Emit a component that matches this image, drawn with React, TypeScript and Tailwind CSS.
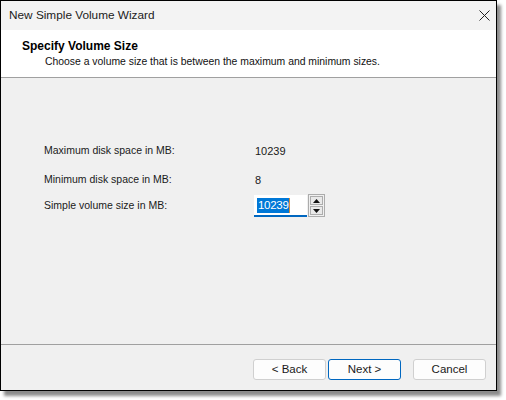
import React from "react";

const ui = { fontFamily: '"Liberation Sans", Arial, sans-serif' };

function WinButton({ label, primary }: { label: string; primary?: boolean }) {
  return (
    <div
      className={
        "flex h-[21px] w-[73px] items-center justify-center rounded-[3px] bg-[#fdfdfd] text-[11.5px] text-[#1a1a1a] " +
        (primary ? "border border-[#0067c0]" : "border border-[#d0d0d0]")
      }
    >
      {label}
    </div>
  );
}

function Spinner() {
  return (
    <div className="ml-[1px] flex h-[23px] w-[17px] flex-col gap-[1px] border border-[#acacac] bg-[#f0f0f0] p-[1px]">
      <div className="flex flex-1 items-center justify-center border border-[#adadad] bg-[#e9e9e9]">
        <svg width="7" height="4" viewBox="0 0 7 4">
          <path d="M0 4 L3.5 0 L7 4 Z" fill="#111" />
        </svg>
      </div>
      <div className="flex flex-1 items-center justify-center border border-[#adadad] bg-[#e9e9e9]">
        <svg width="7" height="4" viewBox="0 0 7 4">
          <path d="M0 0 L7 0 L3.5 4 Z" fill="#111" />
        </svg>
      </div>
    </div>
  );
}

export default function App() {
  return (
    <div className="h-[400px] w-[506px] bg-white" style={ui}>
      <div className="flex h-[391px] w-[497px] flex-col border border-black bg-[#f0f0f0] shadow-[4px_5px_3px_rgba(0,0,0,0.45)]">
        {/* title bar */}
        <div className="flex h-[29px] items-center justify-between bg-[#f3f3f3] pl-[8px] pr-[6px]">
          <span className="text-[11.8px] text-[#1b1b1b]">New Simple Volume Wizard</span>
          <svg width="11" height="11" viewBox="0 0 11 11">
            <path d="M0.5 0.5 L10.5 10.5 M10.5 0.5 L0.5 10.5" stroke="#222" strokeWidth="1" />
          </svg>
        </div>
        {/* header */}
        <div className="flex h-[48px] flex-col border-b border-[#a0a0a0] bg-white pl-[21px] pt-[9px]">
          <span className="text-[12px] font-bold leading-[15px] text-black">Specify Volume Size</span>
          <span className="pl-[23px] text-[10.4px] leading-[16px] text-[#111]">
            Choose a volume size that is between the maximum and minimum sizes.
          </span>
        </div>
        {/* body */}
        <div className="flex flex-1 flex-col border-b border-[#a0a0a0] pl-[43px] pt-[66px] text-[10.5px] text-[#1a1a1a]">
          <div className="flex h-[14px] items-center">
            <span className="w-[211px]">Maximum disk space in MB:</span>
            <span className="text-[11px]">10239</span>
          </div>
          <div className="mt-[15px] flex h-[14px] items-center">
            <span className="w-[211px]">Minimum disk space in MB:</span>
            <span className="text-[11px]">8</span>
          </div>
          <div className="mt-[7px] flex items-center">
            <span className="w-[210px] pt-[1px]">Simple volume size in MB:</span>
            <div className="flex items-center">
              <div className="relative flex h-[22px] w-[53px] items-center bg-white pl-[3px]">
                <span className="bg-[#0078d7] px-[1px] text-[11.5px] leading-[15px] tracking-[-0.3px] text-white">
                  10239
                </span>
                <span className="h-[15px] w-[1px] bg-[#d08b3c]" />
                <div className="absolute bottom-0 left-0 h-[2px] w-full bg-[#0067c0]" />
              </div>
              <Spinner />
            </div>
          </div>
        </div>
        {/* footer */}
        <div className="flex h-[45px] items-start pl-[252px] pt-[14px]">
          <WinButton label="< Back" />
          <div className="ml-[2px]">
            <WinButton label="Next >" primary />
          </div>
          <div className="ml-[12px]">
            <WinButton label="Cancel" />
          </div>
        </div>
      </div>
    </div>
  );
}
